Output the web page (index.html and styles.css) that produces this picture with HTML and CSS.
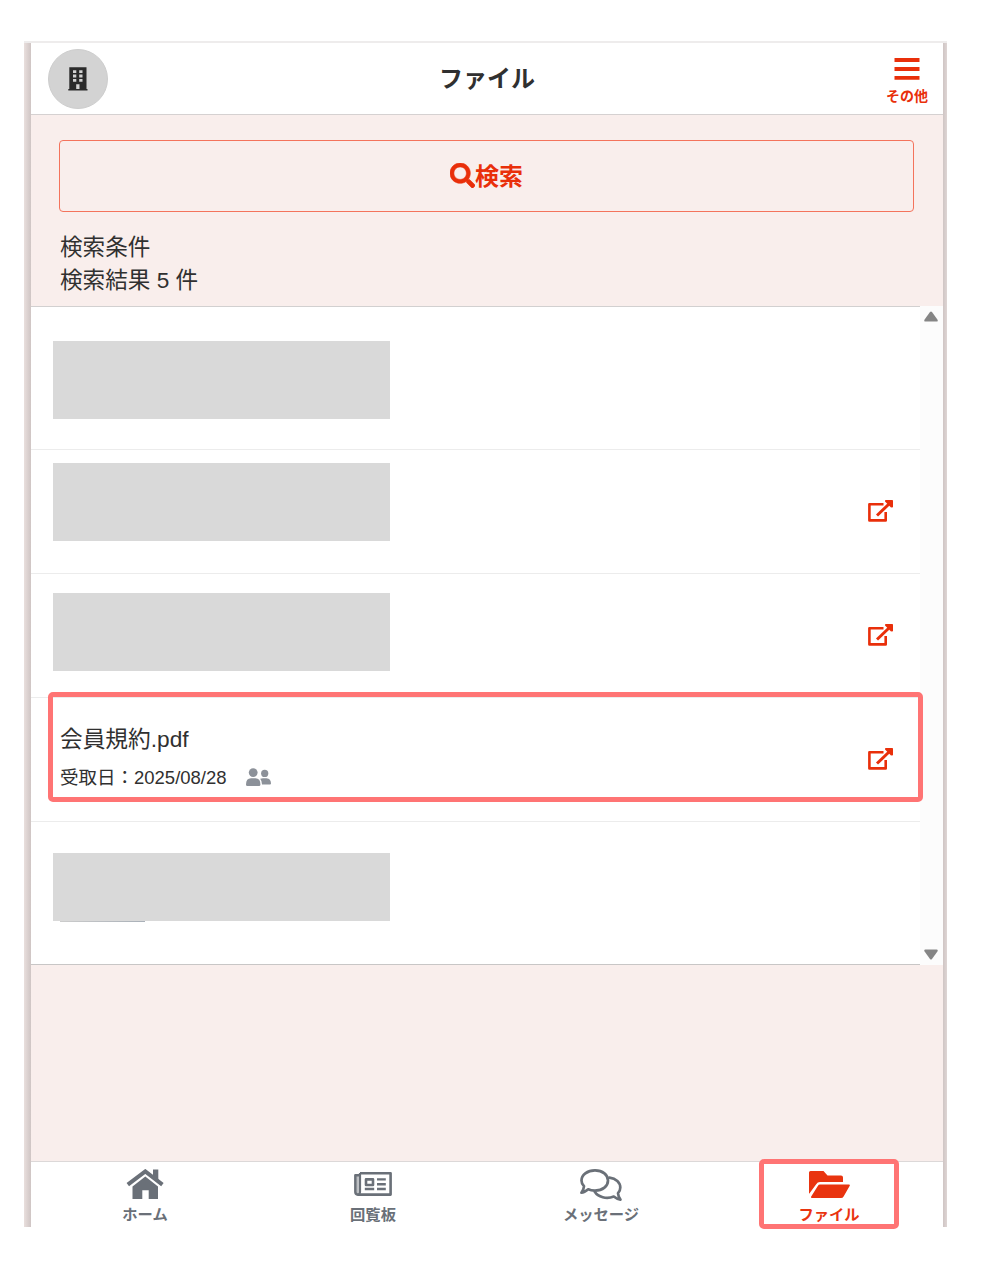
FILE: index.html
```html
<!DOCTYPE html>
<html lang="ja">
  <head>
    <meta charset="UTF-8" />
    <meta name="viewport" content="width=device-width, initial-scale=1.0" />
    <title>ファイル</title>
    <link rel="stylesheet" href="styles.css">
  </head>
  <body>
    <svg class="defs">
      <symbol id="external" viewBox="0 0 25 22">
        <path d="M15.5 4.2H1.4V20.4H17.7V12" fill="none" stroke="currentColor" stroke-width="2.6" stroke-linejoin="round" />
        <path d="M9 15.5L21 4" fill="none" stroke="currentColor" stroke-width="3" />
        <path d="M17.3 0H24.2Q25 0 25 .8V7.3L23 7.5L17 1.5z" fill="currentColor" />
      </symbol>
    </svg>
    <div class="frame">
      <div class="app">
        <header class="header">
          <div class="avatar">
            <svg width="20" height="24" viewBox="0 0 20 24">
              <path fill="currentColor" fill-rule="evenodd" d="M1.3 .3H18.5V22H19.5V23.5H.3V22H1.3zM5 3.2V6H8.3V3.2zM11.2 3.2V6H14.5V3.2zM5 7.6V10.4H8.3V7.6zM11.2 7.6V10.4H14.5V7.6zM5 12V14.8H8.3V12zM11.2 12V14.8H14.5V12zM8.2 17.3V22H11.5V17.3z" />
            </svg>
          </div>
          <h1>ファイル</h1>
          <div class="menu">
            <svg width="26" height="22" viewBox="0 0 26 22">
              <path d="M.5 2H25.5M.5 11H25.5M.5 19.8H25.5" stroke="currentColor" stroke-width="3.8" />
            </svg>
            <span>その他</span>
          </div>
        </header>

        <section class="search">
          <button class="searchbutton">
            <svg width="25" height="25" viewBox="0 0 512 512">
              <path fill="currentColor" stroke="currentColor" stroke-width="12" d="M505 442.7L405.3 343c-4.5-4.5-10.6-7-17-7H372c27.6-35.3 44-79.7 44-128C416 93.1 322.9 0 208 0S0 93.1 0 208s93.1 208 208 208c48.3 0 92.7-16.4 128-44v16.3c0 6.4 2.5 12.5 7 17l99.7 99.7c9.4 9.4 24.6 9.4 33.9 0l28.3-28.3c9.4-9.4 9.4-24.6.1-34zM208 336c-70.7 0-128-57.2-128-128 0-70.7 57.2-128 128-128 70.7 0 128 57.2 128 128 0 70.7-57.2 128-128 128z" />
            </svg>
            <span>検索</span>
          </button>
          <p>検索条件</p>
          <p>検索結果 5 件</p>
        </section>

        <div class="files">
          <ul class="list">
            <li class="row row-tall"><div class="block block-first"></div></li>
            <li class="row">
              <div class="block block-second"></div>
              <svg class="external"><use href="#external" /></svg>
            </li>
            <li class="row">
              <div class="block block-third"></div>
              <svg class="external"><use href="#external" /></svg>
            </li>
            <li class="row">
              <div class="file">
                <div class="filename">会員規約.pdf</div>
                <div class="date">
                  <span>受取日：2025/08/28</span>
                  <svg width="25" height="18" viewBox="0 0 25 18">
                    <g fill="currentColor">
                      <circle cx="7.2" cy="4.6" r="4.4" />
                      <path d="M0 16.5Q0 10.2 5 10.2H9.5Q14.4 10.2 14.4 16.5Q14.4 18 13 18H1.4Q0 18 0 16.5z" />
                      <circle cx="18.7" cy="5.4" r="3.6" />
                      <path d="M14.2 10.8Q15.6 10.2 17 10.2H20.5Q25 10.8 25 15.5Q25 16.6 24 16.6H16Q16 13 14.2 10.8z" />
                    </g>
                  </svg>
                </div>
              </div>
              <svg class="external"><use href="#external" /></svg>
              <div class="mark mark-file"></div>
            </li>
            <li class="row row-last"><div class="block block-last"></div></li>
          </ul>
          <div class="scrollbar">
            <svg width="14" height="11" viewBox="0 0 14 11">
              <path d="M6 1Q7 0 8 1L13.4 8.6Q14.4 10.5 12.5 10.6H1.5Q-.4 10.5 .6 8.6z" fill="#858585" />
            </svg>
            <svg width="14" height="11" viewBox="0 0 14 11">
              <path d="M6 10Q7 11 8 10L13.4 2.4Q14.4 .5 12.5 .4H1.5Q-.4 .5 .6 2.4z" fill="#858585" />
            </svg>
          </div>
        </div>

        <nav class="tabs">
          <div class="tab">
            <svg width="38" height="32" viewBox="0 0 38 32">
              <path d="M1.8 15.7L19.3 2.4L36.4 15.7" fill="none" stroke="currentColor" stroke-width="4" />
              <path d="M27 .6H32.3V12.6L27 8.6z" fill="currentColor" />
              <path d="M6.5 17.4L19.3 7.6L32 17.4V30H22.7V21.3H16.3V30H6.5z" fill="currentColor" />
            </svg>
            <span>ホーム</span>
          </div>
          <div class="tab">
            <svg width="38" height="32" viewBox="0 0 38 32">
              <g fill="none" stroke="currentColor" stroke-linejoin="round">
                <path d="M6 4.2H36.6V25.6H3.8Q1.4 25.6 1.4 23V6.2H6" stroke-width="2.6" />
                <path d="M3.7 6V25" stroke-width="2.2" stroke-opacity=".45" />
                <path d="M6 4V23Q6 25 4.5 25.5" stroke-width="2.2" />
                <path d="M12 10.4H19V16H12z" stroke-width="2.6" />
                <path d="M23 10.4H31.8M23 15.2H31.8M10.8 20H20.2M23 20H31.8" stroke-width="2.4" />
              </g>
            </svg>
            <span>回覧板</span>
          </div>
          <div class="tab">
            <svg width="42" height="32" viewBox="0 0 42 32">
              <g fill="none" stroke="currentColor" stroke-width="2.7" stroke-linejoin="round" stroke-linecap="round">
                <path d="M15 1.4C22.8 1.4 28 5.9 28 11.5S22.8 21.6 15 21.6C12.4 21.6 10.1 21.2 8.2 20.3C6 22.2 3.7 23.6 1.4 23.7C3 21.6 3.9 19.4 4 17.3C2.4 15.7 1.5 13.7 1.5 11.5C1.5 5.9 7.2 1.4 15 1.4z" />
                <path d="M29.5 8.6C36 9.4 40.3 13.5 40.3 18.5C40.3 20.8 39.6 22.7 38 24.3C38.1 26.4 39 28.5 40.4 30.6C38.3 30.3 36 29.3 33.8 27.5C26.5 30.4 18 28.1 14.8 22.8" />
              </g>
            </svg>
            <span>メッセージ</span>
          </div>
          <div class="tab tab-active">
            <svg width="41" height="32" viewBox="0 0 41 32">
              <path fill="currentColor" d="M0 3.5Q0 2 1.5 2H14.5L18.5 6.4H32Q34 6.4 34 8.4V13H11Q8.5 13 7.2 15.2L.4 24.5H0zM11 15.6H40Q41.4 15.6 40.6 17L34.6 27.4Q33.8 29 32 29H3Q1.4 29 2.2 27.5L8.8 16.9Q9.6 15.6 11 15.6z" />
            </svg>
            <span>ファイル</span>
            <div class="mark mark-tab"></div>
          </div>
        </nav>
      </div>
    </div>
  </body>
</html>
```

FILE: styles.css
```css
* {
  box-sizing: border-box;
}
body {
  min-height: 100vh;
  margin: 0;
  padding: 41px 0 0 24px;
  background-color: white;
  color: #303030;
  font-family: "Liberation Sans", "Noto Sans CJK JP", sans-serif;
}
h1,
p,
ul {
  margin: 0;
  padding: 0;
}
svg {
  display: block;
  flex-shrink: 0;
}
.defs {
  display: none;
}
.frame {
  width: 923px;
  height: 1186px;
  padding: 2px 4px 0 7px;
  background: linear-gradient(#eeecec 2px, transparent 2px),
    linear-gradient(to right, #e9dfdd, #cfc5c4 7px, #cfc5c4 919px, #ded5d4);
}
.app {
  display: flex;
  flex-direction: column;
  height: 1184px;
  background-color: #f9eeec;
}
.header {
  display: grid;
  grid-template-columns: 1fr 1fr 1fr;
  align-items: center;
  height: 72px;
  padding: 1px 15px 0 17px;
  border-bottom: 1px solid #d5d1d1;
  background-color: white;
}
.avatar {
  display: flex;
  align-items: center;
  justify-content: center;
  width: 60px;
  height: 60px;
  border: 1px solid #cdcdcd;
  border-radius: 50%;
  background-color: #d3d3d3;
  color: #2b2b2b;
}
h1 {
  padding-right: 2px;
  text-align: center;
  font-size: 24px;
  line-height: 36px;
}
.menu {
  display: flex;
  flex-direction: column;
  align-items: center;
  justify-self: end;
  padding-top: 6px;
  gap: 6px;
  color: #e92f0a;
  font-size: 14px;
  font-weight: bold;
  line-height: 20px;
}
.search {
  height: 191px;
  padding: 25px 28px 0 28px;
  font-size: 22.6px;
  line-height: 33px;
}
.search p {
  padding-left: 1px;
}
.searchbutton {
  display: flex;
  align-items: center;
  justify-content: center;
  width: 855px;
  height: 72px;
  margin-bottom: 19px;
  padding: 0 6px 1px;
  border: 1.5px solid #f4735c;
  border-radius: 4px;
  background: none;
  color: #e92f0a;
  font-family: inherit;
  font-size: 24px;
  font-weight: bold;
}
.searchbutton span {
  margin-top: -3px;
}
.files {
  display: flex;
  height: 659px;
}
.list {
  width: 889px;
  border-top: 1px solid #d2d0d0;
  border-bottom: 1px solid #c8c6c6;
  background-color: white;
  list-style: none;
}
.row {
  display: flex;
  position: relative;
  align-items: center;
  justify-content: space-between;
  height: 124px;
  padding: 0 27px 2px 22px;
  border-bottom: 1px solid #ececec;
}
.row-tall {
  height: 143px;
}
.row-last {
  height: 142px;
  border-bottom: none;
}
.block {
  align-self: flex-start;
  width: 337px;
  height: 78px;
  background-color: #d9d9d9;
}
.block-first {
  margin-top: 34px;
}
.block-second {
  margin-top: 13px;
}
.block-third {
  margin-top: 19px;
}
.block-last {
  height: 68px;
  margin-top: 31px;
}
/* thin line left showing under the last block */
.block-last::after {
  content: "";
  display: block;
  width: 85px;
  height: 1px;
  margin: 68px 0 0 7px;
  background: linear-gradient(to right, #cccccc, #a9b0b8);
}
.external {
  width: 25px;
  height: 22px;
  color: #e92f0a;
}
.file {
  padding-left: 7px;
}
.filename {
  font-size: 22.7px;
  line-height: 38px;
}
.date {
  display: flex;
  align-items: center;
  gap: 19px;
  font-size: 18.5px;
  line-height: 39px;
}
.date svg {
  margin-top: -2px;
  color: #8c9199;
}
.scrollbar {
  display: flex;
  flex-direction: column;
  align-items: center;
  justify-content: space-between;
  width: 23px;
  padding: 5px 1px 5px 0;
  background-color: #fcfcfc;
}
.tabs {
  display: flex;
  height: 66px;
  margin-top: auto;
  border-top: 1px solid #dcd8d8;
  background-color: white;
}
.tab {
  display: flex;
  position: relative;
  flex-direction: column;
  align-items: center;
  flex: 1;
  padding-top: 7px;
  color: #6a7078;
  font-size: 15.3px;
  font-weight: bold;
}
.tab span {
  margin-top: 2px;
  line-height: 24px;
}
.tab-active {
  color: #e9340f;
}
.mark {
  position: absolute;
  border: 5px solid #ff7474;
  border-radius: 5px;
}
.mark-file {
  top: -6px;
  left: 17px;
  width: 875px;
  height: 110px;
  z-index: 1;
}
.mark-tab {
  top: -3px;
  left: 44px;
  width: 140px;
  height: 70px;
}
```
